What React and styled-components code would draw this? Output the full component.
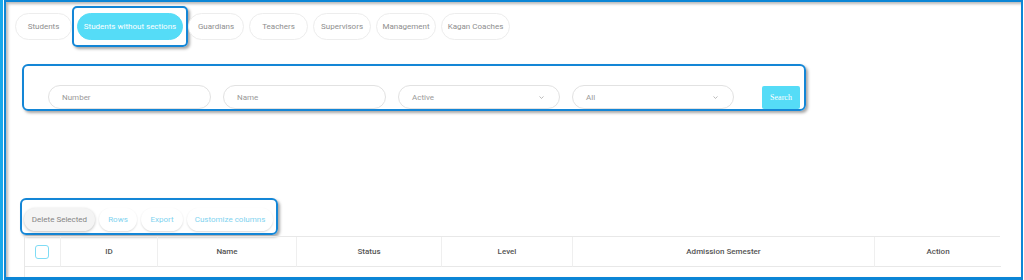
import React from "react";
import styled, { createGlobalStyle } from "styled-components";

const Global = createGlobalStyle`
  html, body { margin: 0; padding: 0; background: #fff; }
  body { font-family: Roboto, "Liberation Sans", Arial, sans-serif; }
  * { box-sizing: border-box; }
`;

const Screen = styled.div`
  width: 1024px;
  height: 280px;
  display: flex;
  background: #fff;
  border-left: 3px solid #1aa9ea;
`;

const Frame = styled.div`
  margin-left: 1px;
  width: 1019px;
  height: 280px;
  border: 2px solid #0c86d6;
  border-bottom-width: 3px;
  box-shadow: inset 2px 2px 3px rgba(0, 0, 0, 0.28);
  display: flex;
  flex-direction: column;
  overflow: hidden;
  background: #fff;
`;

const TabsRow = styled.div`
  display: flex;
  gap: 5px;
  margin: 11px 0 0 9px;
`;

const TabWrap = styled.div`
  position: relative;
  display: flex;
`;

const Tab = styled.div`
  width: ${(p) => p.$w}px;
  height: 27px;
  border-radius: 14px;
  border: 1px solid ${(p) => (p.$active ? "#55dcf7" : "#ededed")};
  background: ${(p) => (p.$active ? "#55dcf7" : "#fff")};
  color: ${(p) => (p.$active ? "#fff" : "#8e8e8e")};
  font-size: 8px;
  display: flex;
  align-items: center;
  justify-content: center;
  white-space: nowrap;
`;

const Highlight = styled.span`
  position: absolute;
  top: -7px;
  left: -5px;
  right: -5px;
  bottom: -7px;
  border: 2px solid #1486d6;
  border-radius: 5px;
  box-shadow: 2px 2px 3px rgba(0, 0, 0, 0.35);
  pointer-events: none;
`;

const FilterBox = styled.div`
  margin: 24px 0 0 16px;
  width: 784px;
  height: 49px;
  border: 2px solid #1486d6;
  border-radius: 6px;
  box-shadow: 2px 2px 3px rgba(0, 0, 0, 0.35);
  padding: 19px 4px 0 24px;
  display: flex;
  align-items: flex-start;
  gap: 12px;
`;

const Field = styled.div`
  width: ${(p) => p.$w}px;
  height: 24px;
  border: 1px solid #e2e2e2;
  border-radius: 12px;
  display: flex;
  align-items: center;
  justify-content: space-between;
  padding: 0 15px 0 13px;
  font-size: 8px;
  color: #9a9a9a;
`;

const Chevron = styled.svg`
  width: 5px;
  height: 3px;
`;

const SearchButton = styled.div`
  margin: 1px 0 0 16px;
  width: 38px;
  height: 23px;
  border-radius: 2px;
  background: #55dcf7;
  color: #fff;
  font-family: "Liberation Serif", "Times New Roman", serif;
  font-size: 8px;
  display: flex;
  align-items: center;
  justify-content: center;
`;

const Toolbar = styled.div`
  margin: 87px 0 0 14px;
  align-self: flex-start;
  display: flex;
  gap: 4px;
  border: 2px solid #1486d6;
  border-radius: 6px;
  box-shadow: 2px 2px 3px rgba(0, 0, 0, 0.35);
  padding: 8px 3px 2px 2px;
`;

const ToolButton = styled.div`
  width: ${(p) => p.$w}px;
  height: 23px;
  border-radius: 12px;
  background: ${(p) => (p.$muted ? "#f4f4f4" : "#fff")};
  box-shadow: ${(p) =>
    p.$muted ? "0 1px 3px rgba(0,0,0,0.25)" : "0 1px 2px rgba(0,0,0,0.14)"};
  color: ${(p) => (p.$muted ? "#858585" : "#7fd3ef")};
  font-size: 8px;
  display: flex;
  align-items: center;
  justify-content: center;
  white-space: nowrap;
`;

const Table = styled.div`
  margin: 1px 0 0 18px;
  width: 976px;
  display: grid;
  grid-template-columns: 36px 97px 139px 145px 131px 302px 126px;
  border-top: 1px solid #e8e8e8;
  border-left: 1px solid #e8e8e8;
`;

const HeadCell = styled.div`
  height: 30px;
  border-bottom: 1px solid #e8e8e8;
  border-right: ${(p) => (p.$last ? "none" : "1px solid #efefef")};
  display: flex;
  align-items: center;
  justify-content: center;
  font-size: 8px;
  font-weight: 500;
  color: #555;
`;

const Checkbox = styled.span`
  width: 14px;
  height: 14px;
  border: 1.5px solid #7fdcf5;
  border-radius: 3px;
  margin-right: 1px;
`;

const BodyRow = styled.div`
  grid-column: 1 / -1;
  height: 30px;
`;

const tabs = [
  { label: "Students", w: 57 },
  { label: "Students without sections", w: 106, active: true },
  { label: "Guardians", w: 56 },
  { label: "Teachers", w: 59 },
  { label: "Supervisors", w: 58 },
  { label: "Management", w: 60 },
  { label: "Kagan Coaches", w: 69 },
];

const fields = [
  { label: "Number", w: 163 },
  { label: "Name", w: 163 },
  { label: "Active", w: 162, select: true },
  { label: "All", w: 162, select: true },
];

const tools = [
  { label: "Delete Selected", w: 71, muted: true },
  { label: "Rows", w: 38 },
  { label: "Export", w: 42 },
  { label: "Customize columns", w: 86 },
];

const columns = ["ID", "Name", "Status", "Level", "Admission Semester", "Action"];

export default function App() {
  return (
    <>
      <Global />
      <Screen>
        <Frame>
          <TabsRow>
            {tabs.map((t) => (
              <TabWrap key={t.label}>
                <Tab $w={t.w} $active={t.active}>
                  {t.label}
                </Tab>
                {t.active && <Highlight />}
              </TabWrap>
            ))}
          </TabsRow>

          <FilterBox>
            {fields.map((f) => (
              <Field key={f.label} $w={f.w}>
                <span>{f.label}</span>
                {f.select && (
                  <Chevron viewBox="0 0 5 3">
                    <path d="M0.5 0.5 L2.5 2.4 L4.5 0.5" fill="none" stroke="#aaa" strokeWidth="0.8" />
                  </Chevron>
                )}
              </Field>
            ))}
            <SearchButton>Search</SearchButton>
          </FilterBox>

          <Toolbar>
            {tools.map((t) => (
              <ToolButton key={t.label} $w={t.w} $muted={t.muted}>
                {t.label}
              </ToolButton>
            ))}
          </Toolbar>

          <Table>
            <HeadCell>
              <Checkbox />
            </HeadCell>
            {columns.map((c, i) => (
              <HeadCell key={c} $last={i === columns.length - 1}>
                {c}
              </HeadCell>
            ))}
            <BodyRow />
          </Table>
        </Frame>
      </Screen>
    </>
  );
}
